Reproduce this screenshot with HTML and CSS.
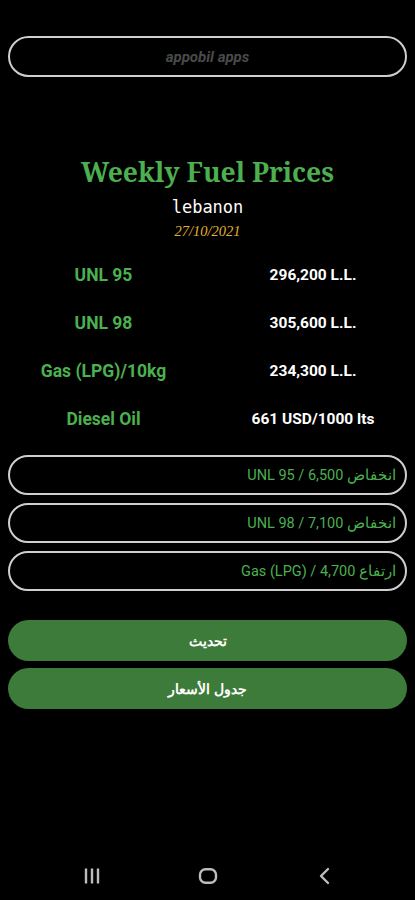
FILE: index.html
```html
<!DOCTYPE html>
<html lang="en">
<head>
<meta charset="utf-8">
<link rel="stylesheet" href="styles.css">
</head>
<body>
<div class="screen">
  <div class="brand">appobil apps</div>
  <h1 class="title">Weekly Fuel Prices</h1>
  <div class="country">lebanon</div>
  <div class="date">27/10/2021</div>
  <div class="prices">
    <div class="row"><span class="label">UNL 95</span><span class="value">296,200 L.L.</span></div>
    <div class="row"><span class="label">UNL 98</span><span class="value">305,600 L.L.</span></div>
    <div class="row"><span class="label">Gas (LPG)/10kg</span><span class="value">234,300 L.L.</span></div>
    <div class="row"><span class="label">Diesel Oil</span><span class="value">661 USD/1000 lts</span></div>
  </div>
  <div class="changes">
    <div class="change" dir="rtl">انخفاض 6,500 / UNL 95</div>
    <div class="change" dir="rtl">انخفاض 7,100 / UNL 98</div>
    <div class="change" dir="rtl">ارتفاع 4,700 / Gas (LPG)</div>
  </div>
  <div class="actions">
    <div class="btn">تحديث</div>
    <div class="btn">جدول الأسعار</div>
  </div>
  <div class="spacer"></div>
  <nav class="navbar">
    <svg width="20" height="20" viewBox="0 0 20 20"><g stroke="#bdbdbd" stroke-width="2.4" fill="none"><line x1="4" y1="2.5" x2="4" y2="17.5"/><line x1="10" y1="2.5" x2="10" y2="17.5"/><line x1="16" y1="2.5" x2="16" y2="17.5"/></g></svg>
    <svg width="20" height="20" viewBox="0 0 20 20"><rect x="2" y="3.2" width="16" height="13.6" rx="5.5" stroke="#bdbdbd" stroke-width="2.4" fill="none"/></svg>
    <svg width="20" height="20" viewBox="0 0 20 20"><polyline points="14,3 7,10 14,17" stroke="#bdbdbd" stroke-width="2.4" fill="none" stroke-linejoin="round" stroke-linecap="round"/></svg>
  </nav>
</div>
</body>
</html>
```
FILE: styles.css
```css
html, body {
  margin: 0;
  padding: 0;
  background: #000;
}
body {
  font-family: Roboto, "Noto Sans", sans-serif;
}
.screen {
  width: 415px;
  height: 900px;
  display: flex;
  flex-direction: column;
  padding-top: 36px;
  box-sizing: border-box;
}
.brand {
  margin: 0 8px;
  height: 41px;
  border: 2px solid #cfcfcf;
  border-radius: 21px;
  box-sizing: border-box;
  display: flex;
  align-items: center;
  justify-content: center;
  color: #4a4a4a;
  font-style: italic;
  font-weight: bold;
  font-size: 15px;
}
.title {
  margin: 79px 0 0;
  text-align: center;
  font-family: "Noto Serif", "DejaVu Serif", "Liberation Serif", serif;
  font-weight: bold;
  font-size: 26.5px;
  line-height: 32px;
  color: #4caf50;
}
.country {
  margin-top: 8px;
  text-align: center;
  font-family: "DejaVu Sans Mono", "Liberation Mono", monospace;
  font-size: 17px;
  line-height: 22px;
  color: #fff;
}
.date {
  margin-top: 5px;
  text-align: center;
  font-family: "Liberation Serif", serif;
  font-style: italic;
  font-size: 14.5px;
  line-height: 16px;
  color: #e0b030;
}
.prices {
  margin-top: 12px;
  display: flex;
  flex-direction: column;
}
.row {
  display: grid;
  grid-template-columns: 207px 1fr;
  height: 48px;
  align-items: center;
  font-weight: bold;
}
.label {
  text-align: center;
  color: #4caf50;
  font-size: 17.5px;
}
.value {
  text-align: center;
  color: #fff;
  font-size: 15.5px;
  padding-left: 4px;
}
.changes {
  margin-top: 12px;
  display: flex;
  flex-direction: column;
  gap: 8px;
  padding: 0 8px;
}
.change {
  height: 40px;
  border: 2px solid #cfcfcf;
  border-radius: 20px;
  box-sizing: border-box;
  display: flex;
  align-items: center;
  padding: 0 9px;
  color: #4caf50;
  font-family: Roboto, "Noto Sans", sans-serif;
  font-size: 14.5px;
}
.actions {
  margin-top: 29px;
  display: flex;
  flex-direction: column;
  gap: 7px;
  padding: 0 8px;
}
.btn {
  height: 41px;
  border-radius: 21px;
  background: #3c7b39;
  color: #fff;
  display: flex;
  align-items: center;
  justify-content: center;
  font-family: "Noto Sans", Roboto, sans-serif;
  font-weight: bold;
  font-size: 14px;
}
.spacer {
  flex: 1;
}
.navbar {
  height: 48px;
  display: flex;
  justify-content: center;
  gap: 96px;
  align-items: center;
  padding-bottom: 0;
  box-sizing: border-box;
}
.navbar svg {
  display: block;
}
```
